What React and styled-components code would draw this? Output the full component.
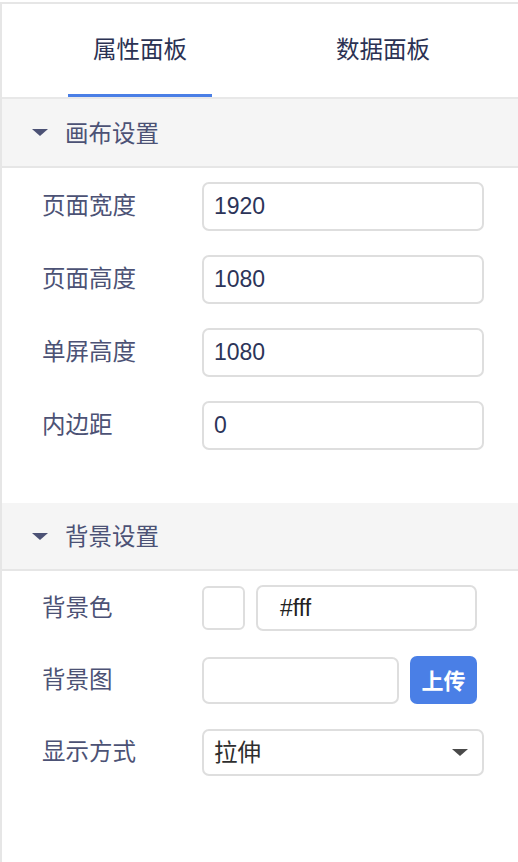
import styled, { createGlobalStyle } from "styled-components"

const GlobalStyle = createGlobalStyle`
  body {
    margin: 0;
    background: #ffffff;
    font-family: "Noto Sans CJK SC", "Noto Sans", sans-serif;
  }
`

const Panel = styled.div`
  margin-top: 2px;
  width: 516px;
  height: 860px;
  border-left: 2px solid #e6e6e6;
  border-top: 2px solid #e6e6e6;
  background: #ffffff;
`

const Tabs = styled.div`
  display: flex;
  gap: 99px;
  padding-left: 66px;
  height: 93px;
  border-bottom: 2px solid #e8e8e8;
`

const Tab = styled.div`
  width: 144px;
  display: flex;
  align-items: center;
  justify-content: center;
  font-size: 23.5px;
  color: #2b3253;
  border-bottom: 3px solid ${(p) => (p.active ? "#4a7fe6" : "transparent")};
  box-sizing: border-box;
  padding-bottom: 2px;
`

const SectionHead = styled.div`
  display: flex;
  align-items: center;
  gap: 17px;
  height: ${(p) => p.h}px;
  padding-left: 30px;
  background: #f5f5f5;
  border-bottom: 2px solid #e6e6e6;
  font-size: 23.5px;
  color: #4c5275;
`

const Caret = styled.span`
  width: 0;
  height: 0;
  border-left: 8px solid transparent;
  border-right: 8px solid transparent;
  border-top: 7px solid ${(p) => p.color || "#4c5275"};
`

const Title = styled.span`
  padding-bottom: 2px;
`

const Body = styled.div`
  display: flex;
  flex-direction: column;
  gap: ${(p) => p.gap}px;
  padding: ${(p) => p.pad};
`

const Row = styled.div`
  display: grid;
  grid-template-columns: 160px auto;
  align-items: center;
  padding-left: 40px;
`

const Label = styled.div`
  font-size: 23.5px;
  color: #4c5275;
  padding-bottom: 5px;
`

const Controls = styled.div`
  display: flex;
  align-items: center;
  gap: 11px;
`

const Input = styled.div`
  box-sizing: border-box;
  width: ${(p) => p.w}px;
  height: ${(p) => p.h}px;
  border: 2px solid #dedede;
  border-radius: 7px;
  display: flex;
  align-items: center;
  padding-left: ${(p) => p.pl || 10}px;
  font-family: "Liberation Sans", Arial, sans-serif;
  font-size: 23px;
  color: ${(p) => p.color || "#2c3459"};
`

const Swatch = styled.div`
  box-sizing: border-box;
  width: 43px;
  height: 44px;
  border: 2px solid #dedede;
  border-radius: 6px;
  background: #ffffff;
`

const Upload = styled.button`
  width: 67px;
  height: 48px;
  border: none;
  border-radius: 7px;
  background: #4a7fe6;
  color: #ffffff;
  font-family: "Noto Sans CJK SC", sans-serif;
  font-size: 22px;
  font-weight: 700;
  padding: 0 0 3px;
`

const Select = styled(Input)`
  justify-content: space-between;
  padding-right: 14px;
  font-family: "Noto Sans CJK SC", sans-serif;
  font-size: 23.5px;
  color: #2e2e2e;
`

const SelectText = styled.span`
  padding-bottom: 3px;
`

const canvasRows = [
  ["页面宽度", "1920"],
  ["页面高度", "1080"],
  ["单屏高度", "1080"],
  ["内边距", "0"],
]

export default function App() {
  return (
    <>
      <GlobalStyle />
      <Panel>
        <Tabs>
          <Tab active>属性面板</Tab>
          <Tab>数据面板</Tab>
        </Tabs>

        <SectionHead h={67}>
          <Caret />
          <Title>画布设置</Title>
        </SectionHead>
        <Body gap={24} pad="14px 0 53px">
          {canvasRows.map(([label, value]) => (
            <Row key={label}>
              <Label>{label}</Label>
              <Input w={282} h={49}>
                {value}
              </Input>
            </Row>
          ))}
        </Body>

        <SectionHead h={66}>
          <Caret />
          <Title>背景设置</Title>
        </SectionHead>
        <Body gap={25} pad="14px 0">
          <Row>
            <Label>背景色</Label>
            <Controls>
              <Swatch />
              <Input w={221} h={46} pl={22} color="#222222">
                #fff
              </Input>
            </Controls>
          </Row>
          <Row>
            <Label>背景图</Label>
            <Controls>
              <Input w={197} h={47} />
              <Upload>上传</Upload>
            </Controls>
          </Row>
          <Row>
            <Label>显示方式</Label>
            <Select w={282} h={47}>
              <SelectText>拉伸</SelectText>
              <Caret color="#4a4a4a" />
            </Select>
          </Row>
        </Body>
      </Panel>
    </>
  )
}
